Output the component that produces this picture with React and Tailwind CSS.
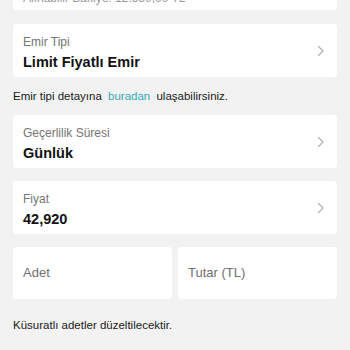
function Chevron() {
    return (
        <svg width="8" height="12" viewBox="0 0 8 12" fill="none" className="shrink-0">
            <path d="M1.5 1.5 L6 6 L1.5 10.5" stroke="#b5b5b5" strokeWidth="1.4" strokeLinecap="round" strokeLinejoin="round" />
        </svg>
    );
}

function SelectCard({ label, value }) {
    return (
        <div className="bg-white rounded-[4px] h-[53px] pl-[10px] pr-[12px] flex items-center justify-between">
            <div className="flex flex-col self-start pt-[11px]">
                <span className="text-[12px] leading-[15px] text-[#747474]">{label}</span>
                <span className="text-[14.5px] leading-[18px] font-semibold text-[#111] mt-[3px]">{value}</span>
            </div>
            <Chevron />
        </div>
    );
}

export default function App() {
    return (
        <div className="w-[350px] h-[350px] overflow-hidden bg-[#f2f2f2] px-[13px] font-['Liberation_Sans',Arial,sans-serif]">
            <div className="bg-white rounded-b-[4px] h-[10px] overflow-hidden pl-[10px]">
                <div className="text-[12px] leading-[15px] text-[#9a9a9a] -mt-[9px] whitespace-nowrap">
                    Alınabilir Bakiye: 12.550,00 TL
                </div>
            </div>

            <div className="mt-[14px]">
                <SelectCard label="Emir Tipi" value="Limit Fiyatlı Emir" />
            </div>

            <p className="text-[11.5px] leading-[38px] text-[#1a1a1a] h-[38px]">
                Emir tipi detayına <span className="text-[#36aab6] mx-[3px]">buradan</span> ulaşabilirsiniz.
            </p>

            <div className="flex flex-col gap-[13px]">
                <SelectCard label="Geçerlilik Süresi" value="Günlük" />
                <SelectCard label="Fiyat" value="42,920" />
                <div className="grid grid-cols-2 gap-[6px]">
                    <div className="bg-white rounded-[4px] h-[52px] pl-[10px] flex items-center text-[13px] text-[#6e6e6e]">Adet</div>
                    <div className="bg-white rounded-[4px] h-[52px] pl-[10px] flex items-center text-[13px] text-[#6e6e6e]">Tutar (TL)</div>
                </div>
            </div>

            <p className="mt-[18px] text-[11.5px] leading-[16px] text-[#1a1a1a]">Küsuratlı adetler düzeltilecektir.</p>
        </div>
    );
}
